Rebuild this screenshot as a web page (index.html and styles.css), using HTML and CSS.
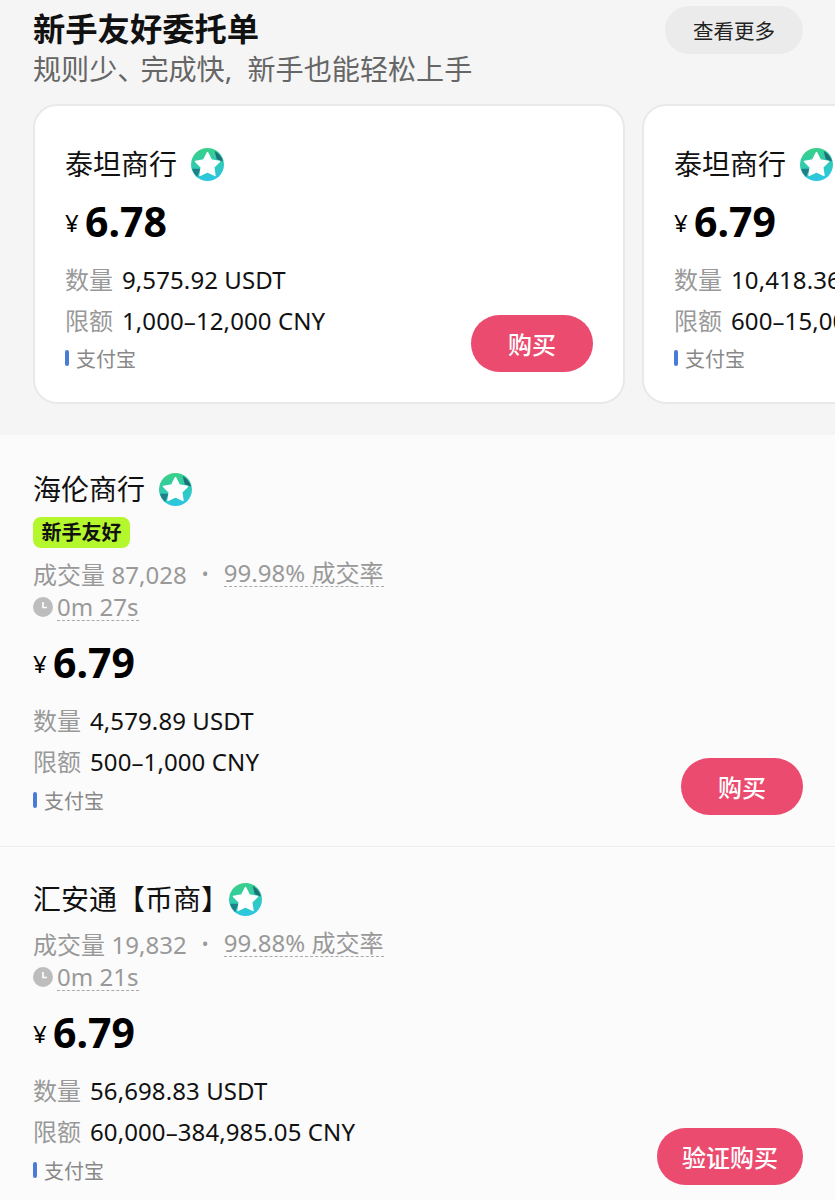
FILE: index.html
```html
<!DOCTYPE HTML>
<html lang="zh-CN">
<head>
	<meta charset="UTF-8">
	<title>新手友好委托单</title>
	<link rel="stylesheet" href="styles.css">
</head>
<body>
	<svg class="defs" width="0" height="0">
		<defs>
			<linearGradient id="badge_bg" x1="0.25" y1="0" x2="0.5" y2="1">
				<stop offset="0" stop-color="#3ad083"/>
				<stop offset="0.55" stop-color="#2fcbb4"/>
				<stop offset="1" stop-color="#2bc6e4"/>
			</linearGradient>
			<symbol id="badge" viewBox="0 0 32 32">
				<circle cx="16" cy="16" r="16" fill="url(#badge_bg)"/>
				<path d="M23 3 A16 16 0 0 1 31 13 L25 11 Z" fill="#1f6f78"/>
				<path d="M1 20 A16 16 0 0 0 6 28 L9 20 Z" fill="#1f7f84"/>
				<path d="M16 4.5 L19.7 11.7 L27.6 13 L22 18.7 L23.2 26.6 L16 23 L8.8 26.6 L10 18.7 L4.4 13 L12.3 11.7 Z" fill="#fff" stroke="#fff" stroke-width="1.5" stroke-linejoin="round"/>
			</symbol>
			<symbol id="clock" viewBox="0 0 20 20">
				<circle cx="10" cy="10" r="10" fill="#bdbdbd"/>
				<path d="M10 5 V10.5 H14" fill="none" stroke="#fff" stroke-width="1.6"/>
			</symbol>
		</defs>
	</svg>

	<!-- bloque de arriba -->
	<section class="top">
		<div class="top_head">
			<div>
				<h1 class="top_title">新手友好委托单</h1>
				<p class="top_sub">规则少<span class="narrow">、</span>完成快, 新手也能轻松上手</p>
			</div>
			<a class="more">查看更多</a>
		</div>
		<div class="cards">
			<div class="offer card">
				<div class="offer_info">
					<div class="name">泰坦商行<svg class="badge"><use href="#badge"/></svg></div>
					<div class="price"><span class="yen">¥</span>6.78</div>
					<div class="line"><span class="label">数量</span>9,575.92 USDT</div>
					<div class="line"><span class="label">限额</span>1,000–12,000 CNY</div>
					<div class="pay"><i class="pay_mark"></i>支付宝</div>
				</div>
				<a class="buy">购买</a>
			</div>
			<div class="offer card">
				<div class="offer_info">
					<div class="name">泰坦商行<svg class="badge"><use href="#badge"/></svg></div>
					<div class="price"><span class="yen">¥</span>6.79</div>
					<div class="line"><span class="label">数量</span>10,418.36 USDT</div>
					<div class="line"><span class="label">限额</span>600–15,000 CNY</div>
					<div class="pay"><i class="pay_mark"></i>支付宝</div>
				</div>
				<a class="buy">购买</a>
			</div>
		</div>
	</section>

	<!-- lista -->
	<section class="list">
		<div class="offer row">
			<div class="offer_info">
				<div class="name">海伦商行<svg class="badge"><use href="#badge"/></svg></div>
				<span class="tag">新手友好</span>
				<div class="stats">成交量 87,028<span class="dot">•</span><span class="dashed">99.98% 成交率</span></div>
				<div class="stats"><svg class="clock"><use href="#clock"/></svg><span class="dashed">0m 27s</span></div>
				<div class="price"><span class="yen">¥</span>6.79</div>
				<div class="line"><span class="label">数量</span>4,579.89 USDT</div>
				<div class="line"><span class="label">限额</span>500–1,000 CNY</div>
				<div class="pay"><i class="pay_mark"></i>支付宝</div>
			</div>
			<a class="buy">购买</a>
		</div>
		<div class="offer row">
			<div class="offer_info">
				<div class="name">汇安通【币商】<svg class="badge badge_tight"><use href="#badge"/></svg></div>
				<div class="stats">成交量 19,832<span class="dot">•</span><span class="dashed">99.88% 成交率</span></div>
				<div class="stats"><svg class="clock"><use href="#clock"/></svg><span class="dashed">0m 21s</span></div>
				<div class="price"><span class="yen">¥</span>6.79</div>
				<div class="line"><span class="label">数量</span>56,698.83 USDT</div>
				<div class="line"><span class="label">限额</span>60,000–384,985.05 CNY</div>
				<div class="pay"><i class="pay_mark"></i>支付宝</div>
			</div>
			<a class="buy buy_wide">验证购买</a>
		</div>
	</section>
</body>
</html>
```

FILE: styles.css
```css
html, body {
margin: 0;
padding: 0;
}
body {
width: 835px;
height: 1200px;
overflow: hidden;
background: #fbfbfb;
color: #111;
font-family: "Noto Sans", "Noto Sans CJK SC", sans-serif;
}
.defs {
display: block;
height: 0;
}

/* bloque de arriba */
.top {
background: #f5f5f5;
padding: 6px 0 31px 33px;
}
.top_head {
display: flex;
justify-content: space-between;
align-items: flex-start;
padding-right: 32px;
}
.top_title {
margin: 0;
font-size: 32.3px;
line-height: 44px;
font-weight: 700;
}
.top_sub {
margin: 0;
font-size: 28.1px;
line-height: 38px;
word-spacing: 8px;
color: #666;
}
.narrow {
letter-spacing: -5px;
}
.more {
width: 138px;
height: 48px;
line-height: 50px;
text-align: center;
font-size: 20.5px;
color: #222;
background: #ebebeb;
border-radius: 24px;
}
.cards {
display: flex;
gap: 17px;
margin-top: 16px;
overflow: hidden;
}
.card {
flex: none;
box-sizing: border-box;
width: 592px;
height: 300px;
padding: 38px 30px 30px 30px;
background: #fff;
border: 2px solid #e9e9e9;
border-radius: 24px;
}
.card .offer_info {
align-self: flex-start;
}
.card .price {
margin-top: 11px;
}
.card .pay {
margin-top: 3px;
}

/* lista */
.list {
padding-top: 2px;
}
.row {
padding: 32px 32px 32px 33px;
border-bottom: 1px solid #eee;
}
.row:last-child {
border-bottom: 0;
}
.row .buy {
margin-bottom: -1px;
}

/* una oferta */
.offer {
display: flex;
justify-content: space-between;
align-items: flex-end;
}
.name {
display: flex;
align-items: center;
font-size: 28px;
line-height: 40px;
}
.badge {
width: 33px;
height: 33px;
margin-left: 14px;
}
.badge_tight {
margin-left: 0;
}
.tag {
display: block;
width: 97px;
height: 31px;
margin: 8px 0;
line-height: 31px;
text-align: center;
font-size: 20px;
font-weight: 700;
background: #b5f72d;
border-radius: 8px;
}
.name + .stats {
margin-top: 7px;
}
.stats {
display: flex;
align-items: center;
height: 34px;
font-size: 24px;
letter-spacing: 0.05px;
color: #999;
}
.dot {
margin: 0 15px;
font-size: 18px;
}
.dashed {
line-height: 27px;
border-bottom: 1px dashed #aaa;
}
.clock {
width: 20px;
height: 20px;
margin-right: 4px;
}
.price {
display: flex;
align-items: center;
margin-top: 12px;
font-size: 41px;
line-height: 52px;
font-weight: 700;
color: #000;
}
.yen {
width: 20px;
padding-top: 3px;
font-size: 24px;
line-height: 24px;
font-weight: 400;
}
.line {
height: 41px;
font-size: 24px;
line-height: 41px;
letter-spacing: 0.1px;
}
.price + .line {
margin-top: 12px;
}
.label {
margin-right: 9px;
letter-spacing: 0;
color: #999;
}
.pay {
display: flex;
align-items: center;
height: 28px;
margin-top: 4px;
font-size: 20px;
color: #888;
}
.pay_mark {
width: 4px;
height: 16px;
margin-right: 7px;
background: #4a7bd8;
border-radius: 2px;
}
.buy {
flex: none;
width: 122px;
height: 57px;
line-height: 59px;
text-align: center;
font-size: 24px;
font-weight: 500;
color: #fff;
background: #ea4b6e;
border-radius: 29px;
}
.buy_wide {
width: 146px;
}
```
